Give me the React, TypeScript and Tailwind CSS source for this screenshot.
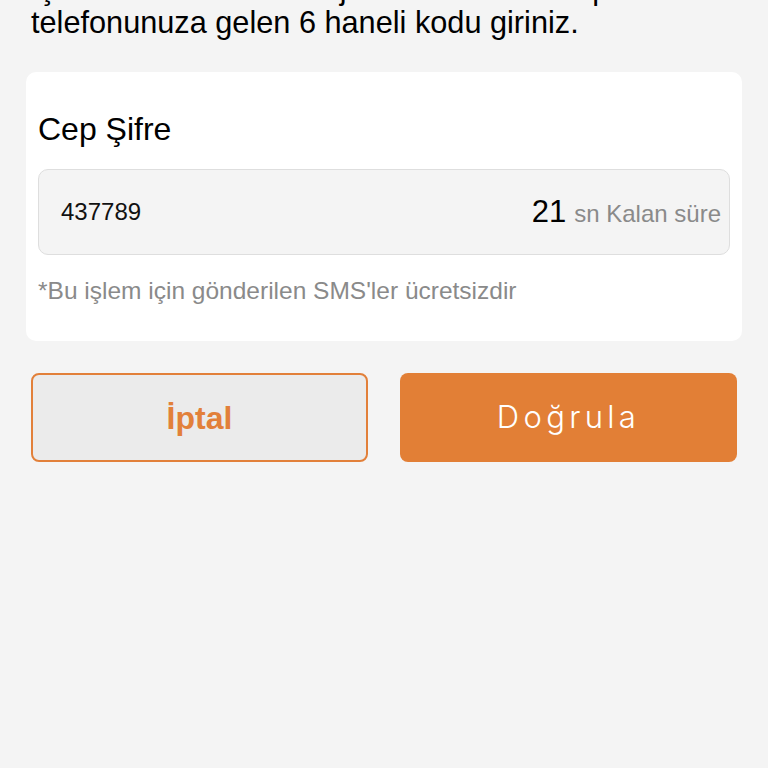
export default function App() {
  return (
    <div
      className="min-h-screen w-full overflow-hidden bg-[#f4f4f4]"
      style={{ fontFamily: '"Liberation Sans", Arial, sans-serif' }}
    >
      {/* page is scrolled: first line of the intro is cut off at the top */}
      <div className="-mt-[28px] px-[31px] text-[30.7px] leading-[34px] text-black">
        <p className="whitespace-nowrap">İşleminizi bu kez mesaj ile size anında cep</p>
        <p className="whitespace-nowrap">telefonunuza gelen 6 haneli kodu giriniz.</p>
      </div>

      <div className="mx-[26px] mt-[32px] rounded-[10px] bg-white px-3 pb-[34px] pt-[37px]">
        <label className="block text-[32px] leading-[40px] text-black">Cep Şifre</label>
        <div className="mt-5 flex h-[86px] items-center justify-between rounded-[10px] border border-[#dedede] bg-[#f4f4f4] pl-[22px] pr-2">
          <span className="text-[24px] text-[#111]">437789</span>
          <span className="flex items-baseline gap-2">
            <span className="text-[31px] text-black">21</span>
            <span className="text-[24px] text-[#8a8a8a]">sn Kalan süre</span>
          </span>
        </div>
        <p className="mt-5 text-[24.5px] leading-[32px] text-[#8a8a8a]">
          *Bu işlem için gönderilen SMS'ler ücretsizdir
        </p>
      </div>

      <div className="mt-8 grid grid-cols-2 gap-8 px-[31px]">
        <button className="flex h-[89px] items-center justify-center rounded-[8px] border-2 border-[#e2803a] bg-[#ebebeb] text-[32px] font-bold text-[#e2803a]">
          İptal
        </button>
        <button
          className="flex h-[89px] items-center justify-center rounded-[8px] bg-[#e27f36] text-[31px] font-light tracking-[0.14em] text-white"
          style={{ fontFamily: 'Inter, "Liberation Sans", sans-serif' }}
        >
          Doğrula
        </button>
      </div>
    </div>
  );
}
